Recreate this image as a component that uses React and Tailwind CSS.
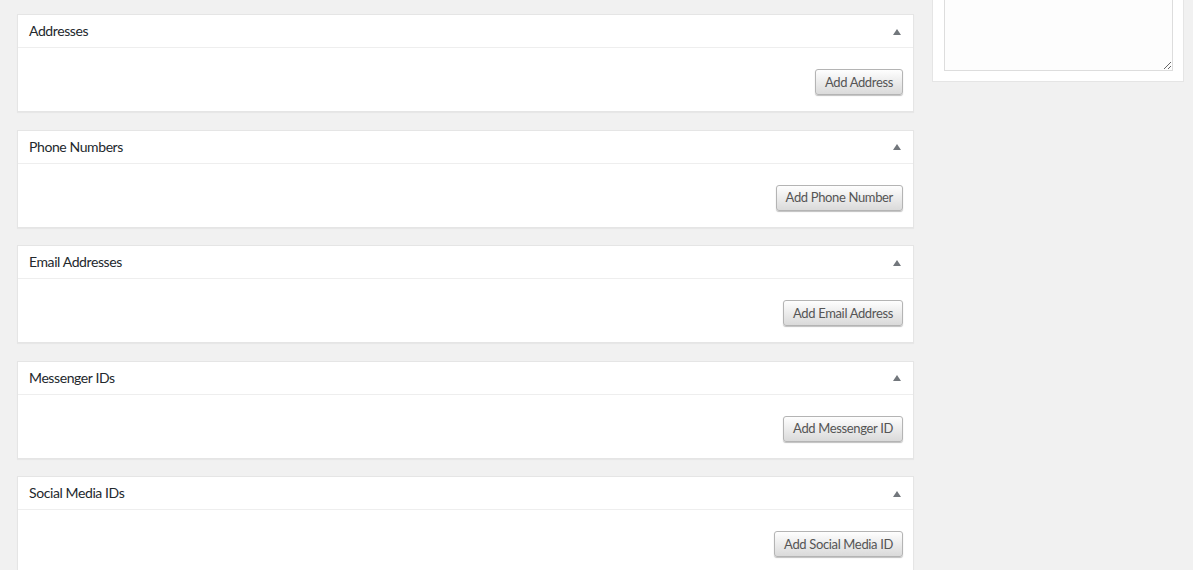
const sections = [
  { title: "Addresses", button: "Add Address" },
  { title: "Phone Numbers", button: "Add Phone Number" },
  { title: "Email Addresses", button: "Add Email Address" },
  { title: "Messenger IDs", button: "Add Messenger ID" },
  { title: "Social Media IDs", button: "Add Social Media ID" },
];

function Postbox({ title, button }) {
  return (
    <div className="bg-white border border-[#e5e5e5] shadow-[0_1px_1px_rgba(0,0,0,0.04)] mb-[17.5px]">
      {/* header */}
      <div className="h-[33px] flex items-center justify-between pl-[11px] pr-[12px] border-b border-[#eeeeee]">
        <h2 className="text-[14px] text-[#23282d] leading-none tracking-[-0.4px]">{title}</h2>
        <svg width="8" height="6" viewBox="0 0 8 6" className="mt-[1px]">
          <path d="M4 0 L8 6 L0 6 Z" fill="#72777c" />
        </svg>
      </div>
      {/* body */}
      <div className="h-[63px] flex justify-end items-start pt-[21px] pr-[10px]">
        <button className="h-[26px] px-[9px] text-[13px] text-[#555] tracking-[-0.35px] rounded-[3px] border border-[#b4b4b4] bg-gradient-to-b from-[#fefefe] to-[#dadada] shadow-[0_1px_1px_rgba(0,0,0,0.25)] leading-none">
          {button}
        </button>
      </div>
    </div>
  );
}

export default function App() {
  return (
    <div
      className="min-h-[570px] bg-[#f1f1f1] flex items-start gap-[18px] pl-[17px]"
      style={{ fontFamily: "Lato, 'Open Sans', sans-serif" }}
    >
      {/* LEFT: contact sections */}
      <div className="w-[897px] pt-[14px]">
        {sections.map((s) => (
          <Postbox key={s.title} title={s.title} button={s.button} />
        ))}
      </div>

      {/* RIGHT: notes box (cut off at top) */}
      <div className="w-[252px] bg-white border border-t-0 border-[#e5e5e5] pl-[11px] pr-[10px] pb-[10px]">
        <textarea
          readOnly
          className="block w-[229px] h-[71px] bg-[#fdfdfd] border border-t-0 border-[#dddddd] outline-none"
        />
      </div>
    </div>
  );
}
